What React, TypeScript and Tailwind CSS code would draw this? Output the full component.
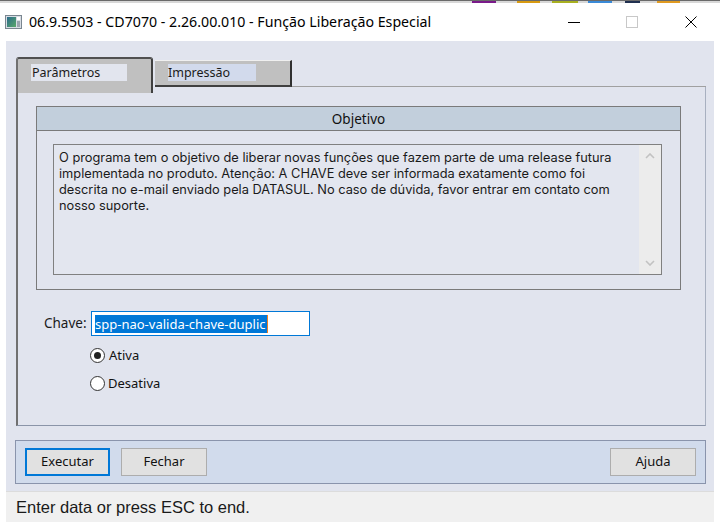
import React from "react";

const F = "[font-family:'Noto_Sans',sans-serif]";

export default function App() {
  return (
    <div className={`w-[720px] h-[524px] bg-white overflow-hidden flex flex-col ${F} text-[#000]`}>
      {/* taskbar remnant strip */}
      <div className="h-[3px] flex bg-[#d8d8d8] border-t border-[#6a6a6a]">
        <div className="w-[472px]" />
        <div className="w-[24px] bg-[#7a1a8a]" />
        <div className="w-[21px]" />
        <div className="w-[23px] bg-[#d89a10]" />
        <div className="w-[12px]" />
        <div className="w-[26px] bg-[#a8b020]" />
        <div className="w-[10px]" />
        <div className="w-[24px] bg-[#3a8ad8]" />
        <div className="w-[13px]" />
        <div className="w-[15px] bg-[#203050]" />
        <div className="w-[17px]" />
        <div className="w-[23px] bg-[#e09a20]" />
      </div>
      {/* title bar */}
      <div className="h-[38px] flex items-center bg-white">
        <svg width="17" height="14" viewBox="0 0 17 14" className="ml-[5px] mr-[7px]">
          <rect x="0.5" y="0.5" width="16" height="13" fill="#d8dde4" stroke="#7a8690" />
          <defs>
            <linearGradient id="g" x1="0" y1="0" x2="1" y2="1">
              <stop offset="0" stopColor="#2a6a8a" />
              <stop offset="1" stopColor="#5aa86a" />
            </linearGradient>
          </defs>
          <rect x="2" y="2" width="9" height="10" fill="url(#g)" />
          <rect x="12" y="2" width="3" height="3" fill="#ffffff" />
          <rect x="12" y="6" width="3" height="6" fill="#9aa4ae" />
        </svg>
        <span className="text-[14.2px] text-[#000]">06.9.5503 - CD7070 - 2.26.00.010 - Função Liberação Especial</span>
        <div className="flex-1" />
        <div className="w-[12px] h-px bg-black mr-[46px]" />
        <div className="w-[12px] h-[12px] border border-[#c8c8c8] mr-[47px]" />
        <svg width="12" height="12" viewBox="0 0 12 12" className="mr-[23px]">
          <path d="M0.5 0.5 L11.5 11.5 M11.5 0.5 L0.5 11.5" stroke="#000" strokeWidth="1" />
        </svg>
      </div>
      {/* window body */}
      <div className="mx-[6px] h-[450px] bg-[#e1e4ee] flex flex-col pt-[16px]">
        {/* tabs */}
        <div className="h-[30px] flex items-start pl-[10px]">
          <div className="relative z-10 w-[137px] h-[36px] bg-[#c0c0c0] border-t-2 border-l-2 border-r-2 border-t-[#505050] border-l-[#707070] border-r-[#404040] rounded-t-[3px] pt-[5px] pl-[13px]">
            <div className="w-[96px] h-[17px] bg-[#e2e5ee] text-[12.5px] leading-[17px] pl-[1px] text-[#1a1a1a]">Parâmetros</div>
          </div>
          <div className="ml-[2px] mt-[3px] w-[137px] h-[27px] bg-[#c0c0c0] border-t border-t-[#f0f0f0] border-r-2 border-r-[#303030] border-b-2 border-b-[#404040] pt-[3px] pl-[13px]">
            <div className="w-[88px] h-[17px] bg-[#d2daec] text-[12.5px] leading-[17px] text-[#1a1a1a]">Impressão</div>
          </div>
          <div className="flex-1 h-[30px] border-b border-[#a0a0a0] mr-[8px]" />
        </div>
        {/* tab panel */}
        <div className="ml-[10px] mr-[8px] h-[339px] border-l-2 border-l-[#707070] border-r border-r-[#a8b0c0] border-b border-b-[#8a94a8] px-[18px] pt-[19px]">
          <div className="w-[645px] h-[184px] border border-[#7a7a7a] flex flex-col">
            <div className="h-[24px] bg-[#c2cfdc] border-b border-[#7a7a7a] flex items-center justify-center text-[13.5px] text-[#111] pt-px">Objetivo</div>
            <div className="flex-1 px-[16px] pt-[13px]">
              <div className="w-[609px] h-[131px] border border-[#808080] flex bg-[#e3e6ef]">
                <div className="flex-1 px-[5px] pt-[5px] text-[12.8px] leading-[16px] text-[#1a1a1a] [font-family:Inter,sans-serif]">
                  <div>O programa tem o objetivo de liberar novas funções que fazem parte de uma release futura</div>
                  <div>implementada no produto. Atenção: A CHAVE deve ser informada exatamente como foi</div>
                  <div>descrita no e-mail enviado pela DATASUL. No caso de dúvida, favor entrar em contato com</div>
                  <div>nosso suporte.</div>
                </div>
                <div className="w-[22px] bg-[#ececec] flex flex-col items-center justify-between py-[8px]">
                  <svg width="10" height="6" viewBox="0 0 10 6"><path d="M1 5 L5 1 L9 5" fill="none" stroke="#c2c2c2" strokeWidth="1.6" /></svg>
                  <svg width="10" height="6" viewBox="0 0 10 6"><path d="M1 1 L5 5 L9 1" fill="none" stroke="#c2c2c2" strokeWidth="1.6" /></svg>
                </div>
              </div>
            </div>
          </div>
          {/* Chave */}
          <div className="mt-[21px] flex items-center">
            <span className="ml-[8px] w-[47px] text-[13.5px] text-[#1a1a1a]">Chave:</span>
            <div className="w-[219px] h-[25px] bg-white border border-[#0078d7] flex items-center pl-[3px]">
              <span className="bg-[#0078d7] text-white text-[13px] leading-[18px] pr-px">spp-nao-valida-chave-duplic</span>
              <div className="w-px h-[18px] bg-[#f08020]" />
            </div>
          </div>
          <div className="ml-[54px] mt-[11px] flex flex-col gap-[11px]">
            <div className="flex items-center h-[17px]">
              <div className="w-[15px] h-[15px] rounded-full border border-[#333] bg-white flex items-center justify-center">
                <div className="w-[7px] h-[7px] rounded-full bg-[#222]" />
              </div>
              <span className="ml-[4px] text-[13px] text-[#111]">Ativa</span>
            </div>
            <div className="flex items-center h-[17px]">
              <div className="w-[15px] h-[15px] rounded-full border border-[#333] bg-white" />
              <span className="ml-[3px] text-[13px] text-[#111]">Desativa</span>
            </div>
          </div>
        </div>
        {/* button bar */}
        <div className="ml-[9px] mr-[8px] mt-[14px] h-[44px] bg-[#d1dbec] border border-[#8a94ac] flex items-center px-[9px]">
          <button className="w-[85px] h-[28px] bg-[#e1e1e1] border-2 border-[#0078d7] text-[13px] text-[#111]">Executar</button>
          <button className="ml-[11px] w-[86px] h-[28px] bg-[#e1e1e1] border border-[#adadad] text-[13px] text-[#111]">Fechar</button>
          <div className="flex-1" />
          <button className="w-[86px] h-[28px] bg-[#e1e1e1] border border-[#adadad] text-[13px] text-[#111]">Ajuda</button>
        </div>
        <div className="flex-1" />
      </div>
      {/* status bar */}
      <div className="mx-[6px] h-[31px] bg-[#f0f0f0] border-t border-[#dcdcdc] flex items-center pl-[10px]">
        <span className="text-[16.5px] text-[#1a1a1a] [font-family:'Liberation_Sans',sans-serif]">Enter data or press ESC to end.</span>
      </div>
    </div>
  );
}
